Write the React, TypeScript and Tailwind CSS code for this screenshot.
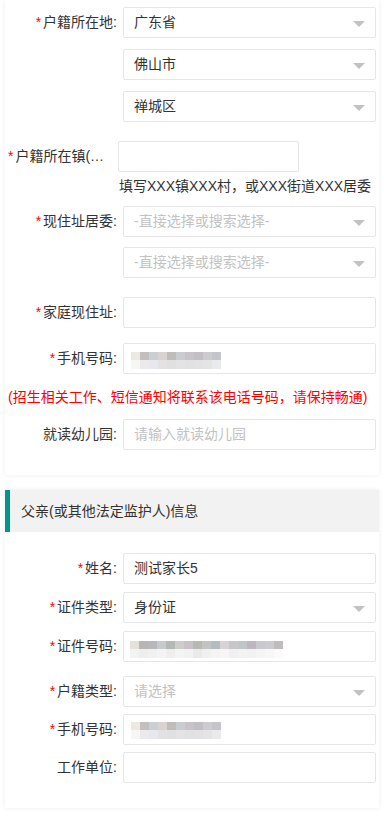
import React from "react";

const font = { fontFamily: '"Liberation Sans", "Noto Sans CJK SC", sans-serif' };

const phoneTop = ["#ece8e2", "#c4bebe", "#cbced2", "#d8d2d1", "#bfbcb9", "#c9cdd1", "#c7c3c9", "#c1bec5", "#cccbcf", "#c4c4ca"];
const phoneBottom = ["#f7f6f4", "#ebe9ec", "#e6e8ee", "#e3e1e1", "#e1e0e0", "#e3e3e5", "#e1e0e3", "#e2e1e3", "#e4e3e5", "#e9eaec"];
const idTop = ["#e4e0dc", "#bab5b5", "#b7b7bc", "#c7cacd", "#b6b8b6", "#cdcdcb", "#c9c1c8", "#b7bab3", "#c3c3c3", "#b4bcc0", "#d7d3d5", "#c8c6c8", "#c0c6c6", "#bdb7c0", "#c9c8cf", "#ccccd0", "#c0bcbc"];
const idBottom = ["#f3f3f3", "#eeeeef", "#f1f1f2", "#f4f4f4", "#eeeeee", "#f4f4f4", "#f2f2f2", "#eaeaea", "#f0f0f0", "#f4f4f4", "#f6f6f6", "#f0f0f0", "#f3f3f3", "#f2f2f2", "#f5f5f5", "#f7f7f7", "#fbfbfb"];

function Blur({ top, bottom }: { top: string[]; bottom: string[] }) {
  return (
    <div className="flex flex-col">
      <div className="flex">
        {top.map((c, i) => (
          <div key={i} className="h-[8px] w-[9px]" style={{ background: c }} />
        ))}
      </div>
      <div className="flex">
        {bottom.map((c, i) => (
          <div key={i} className="h-[9px] w-[9px]" style={{ background: c }} />
        ))}
      </div>
    </div>
  );
}

function Label({ text, req }: { text?: string; req?: boolean }) {
  return (
    <div className="w-[113px] shrink-0 pr-[1px] text-right text-[14px] text-[#333]">
      {text && (
        <>
          {req && <span className="mr-[2px] text-[#ff0000]">*</span>}
          {text}:
        </>
      )}
    </div>
  );
}

function Arrow() {
  return <span className="absolute right-[10px] top-[13px] h-0 w-0 border-x-[6px] border-t-[6px] border-x-transparent border-t-[#c2c2c2]" />;
}

function Box({
  value,
  placeholder,
  select,
  children,
}: {
  value?: string;
  placeholder?: string;
  select?: boolean;
  children?: React.ReactNode;
}) {
  return (
    <div className="relative ml-[5px] flex h-[31px] flex-1 items-center rounded-[2px] border border-[#e6e6e6] bg-white pl-[10px] text-[14px]">
      {children ? children : value ? <span className="text-[#333]">{value}</span> : <span className="text-[#c2c2c2]">{placeholder}</span>}
      {select && <Arrow />}
    </div>
  );
}

function Row({ mt, children }: { mt: string; children: React.ReactNode }) {
  return <div className={`flex items-center pr-[3px] ${mt}`}>{children}</div>;
}

export default function App() {
  return (
    <div className="min-h-screen bg-white px-[5px]" style={font}>
      {/* 学生信息卡片（上半部分） */}
      <div className="bg-white pb-[25px] pt-[7px] shadow-[0_0_5px_rgba(0,0,0,0.08)]">
        <Row mt="mt-0">
          <Label text="户籍所在地" req />
          <Box value="广东省" select />
        </Row>
        <Row mt="mt-[11px]">
          <Label />
          <Box value="佛山市" select />
        </Row>
        <Row mt="mt-[11px]">
          <Label />
          <Box value="禅城区" select />
        </Row>

        <div className="mt-[19px] flex items-center">
          <div className="w-[113px] shrink-0 pl-[3px] text-[14px] text-[#333] whitespace-nowrap">
            <span className="mr-[2px] text-[#ff0000]">*</span>户籍所在镇(…
          </div>
          <div className="h-[31px] w-[181px] rounded-[2px] border border-[#e6e6e6] bg-white" />
        </div>
        <div className="ml-[114px] mt-[4px] h-[20px] text-[14px] leading-[20px] text-[#333]">
          填写XXX镇XXX村，或XXX街道XXX居委
        </div>

        <Row mt="mt-[10px]">
          <Label text="现住址居委" req />
          <Box placeholder="-直接选择或搜索选择-" select />
        </Row>
        <Row mt="mt-[10px]">
          <Label />
          <Box placeholder="-直接选择或搜索选择-" select />
        </Row>

        <Row mt="mt-[19px]">
          <Label text="家庭现住址" req />
          <Box />
        </Row>
        <Row mt="mt-[15px]">
          <Label text="手机号码" req />
          <Box>
            <div className="ml-[-3px] mt-[4px]">
              <Blur top={phoneTop} bottom={phoneBottom} />
            </div>
          </Box>
        </Row>
        <div className="mt-[13px] pl-[3px] text-[14px] leading-[20px] text-[#ff0000] whitespace-nowrap">
          (招生相关工作、短信通知将联系该电话号码，请保持畅通)
        </div>
        <Row mt="mt-[12px]">
          <Label text="就读幼儿园" />
          <Box placeholder="请输入就读幼儿园" />
        </Row>
      </div>

      {/* 父亲信息 */}
      <div className="mt-[15px] bg-white pb-[25px] shadow-[0_0_5px_rgba(0,0,0,0.08)]">
        <div className="flex h-[42px] items-center border-l-[5px] border-[#009688] bg-[#f2f2f2] pl-[11px] text-[14px] text-[#333]">
          父亲(或其他法定监护人)信息
        </div>
        <Row mt="mt-[21px]">
          <Label text="姓名" req />
          <Box value="测试家长5" />
        </Row>
        <Row mt="mt-[8px]">
          <Label text="证件类型" req />
          <Box value="身份证" select />
        </Row>
        <Row mt="mt-[8px]">
          <Label text="证件号码" req />
          <Box>
            <div className="ml-[-4px] mt-[5px]">
              <Blur top={idTop} bottom={idBottom} />
            </div>
          </Box>
        </Row>
        <Row mt="mt-[14px]">
          <Label text="户籍类型" req />
          <Box placeholder="请选择" select />
        </Row>
        <Row mt="mt-[7px]">
          <Label text="手机号码" req />
          <Box>
            <div className="ml-[-3px] mt-[2px]">
              <Blur top={phoneTop} bottom={phoneBottom} />
            </div>
          </Box>
        </Row>
        <Row mt="mt-[7px]">
          <Label text="工作单位" />
          <Box />
        </Row>
      </div>
    </div>
  );
}
